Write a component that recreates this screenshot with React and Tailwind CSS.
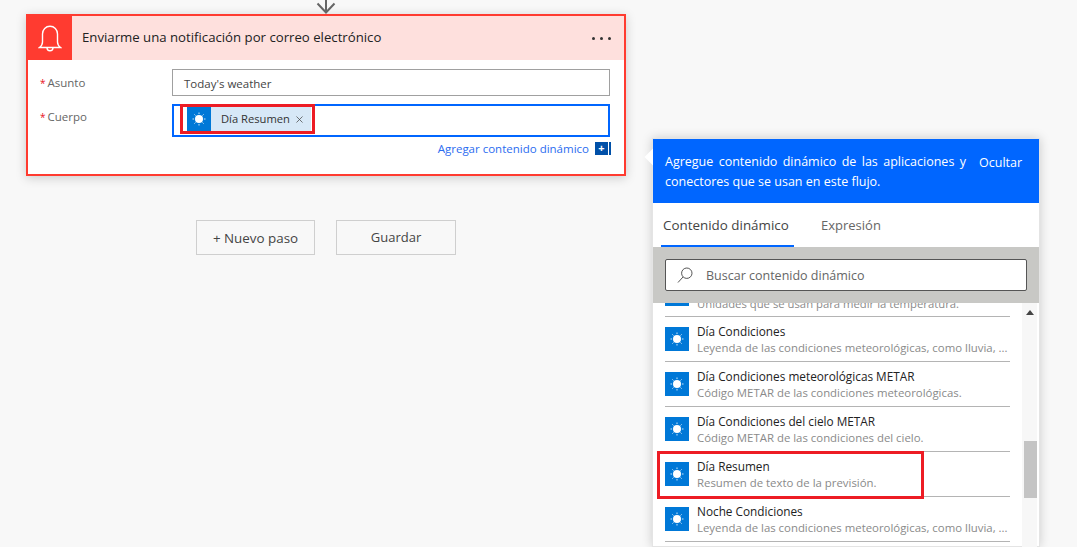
import React from 'react';
import { X } from 'lucide-react';

const items = [
  { title: 'Día Condiciones', desc: 'Leyenda de las condiciones meteorológicas, como lluvia, ...' },
  { title: 'Día Condiciones meteorológicas METAR', desc: 'Código METAR de las condiciones meteorológicas.' },
  { title: 'Día Condiciones del cielo METAR', desc: 'Código METAR de las condiciones del cielo.' },
  { title: 'Día Resumen', desc: 'Resumen de texto de la previsión.', marked: true },
  { title: 'Noche Condiciones', desc: 'Leyenda de las condiciones meteorológicas, como lluvia, ...' },
];

const SunIcon = () => (
  <div className="w-6 h-6 shrink-0 bg-[#0078d7] flex items-center justify-center">
    <svg width="16" height="16" viewBox="0 0 16 16" fill="none">
      <circle cx="8" cy="8" r="4" fill="#fff" />
      <g stroke="#cfe6f8" strokeWidth="1">
        <path d="M8 1.500v1.600M8 12.900v1.600M1.500 8h1.600M12.900 8h1.600M3.400 3.400l1.100 1.100M11.500 11.500l1.100 1.100M3.400 12.600l1.100-1.100M11.500 4.500l1.100-1.100" />
      </g>
    </svg>
  </div>
);

const BellIcon = () => (
  <svg width="24" height="27" viewBox="0 0 24 27" fill="none" stroke="#fff" strokeWidth="1.4">
    <path d="M1.500 22.500c2-1.500 3-3 3-5.500V9C4.500 4.500 7.800 1.200 12 1.200S19.500 4.500 19.500 9v8c0 2.500 1 4 3 5.500z" />
    <path d="M9 22.800a3 3 0 0 0 6 0" />
  </svg>
);

const SearchIcon = () => (
  <svg width="16" height="17" viewBox="0 0 16 17" fill="none" stroke="#555" strokeWidth="1">
    <circle cx="9.800" cy="6.200" r="5.200" />
    <path d="M6 10L1 15.500" />
  </svg>
);

const DynamicItem = ({ title, desc, marked }) => (
  <div className="relative h-[45px] pt-[10px] border-b border-[#b4b4b4] flex gap-2">
    <SunIcon />
    <div className="min-w-0 -mt-[4px]">
      <div className="text-[11.800px] leading-4 text-[#222] whitespace-nowrap">{title}</div>
      <div className="text-[11.400px] leading-4 mt-[1px] text-[#8a8a8a] whitespace-nowrap">{desc}</div>
    </div>
    {marked && (
      <div className="absolute -left-2 top-[-1px] w-[267px] h-[48px] border-[3px] border-[#ed1c24]" />
    )}
  </div>
);

export default function App() {
  return (
    <div className="h-[547px] w-[1077px] overflow-hidden bg-[#f8f8f8] flex font-['Open_Sans',sans-serif]">
      <div className="w-[652px] shrink-0 pl-[26px]">
        <div className="h-[14px] w-[600px] flex justify-center overflow-hidden">
          <svg width="20" height="14" viewBox="0 0 20 14" fill="none" stroke="#666" strokeWidth="2">
            <path d="M10 -2v14M1.500 3.500l8.500 9 8.500-9" />
          </svg>
        </div>

        <div className="w-[600px] h-[162px] border-2 border-[#ff3b30] bg-white shadow-[0_2px_10px_rgba(0,0,0,0.18)]">
          <div className="h-11 bg-[#fee0dd] flex items-center">
            <div className="w-11 h-11 bg-[#ff3b30] flex items-center justify-center">
              <BellIcon />
            </div>
            <div className="ml-[10px] flex-1 text-[13.200px] text-[#222]">
              Enviarme una notificación por correo electrónico
            </div>
            <div className="mr-[13px] flex gap-[5px]">
              <span className="w-[3px] h-[3px] rounded-full bg-[#333]" />
              <span className="w-[3px] h-[3px] rounded-full bg-[#333]" />
              <span className="w-[3px] h-[3px] rounded-full bg-[#333]" />
            </div>
          </div>

          <div className="pl-[12px] pr-[14px] pt-[9px]">
            <div className="flex items-start">
              <div className="w-[132px] text-[11.500px] leading-[26px] mt-[1px] text-[#666]">
                <span className="text-[#e81123] text-[10px] mr-[2px]">*</span>Asunto
              </div>
              <div className="flex-1 h-[27px] border border-[#a0a0a0] pl-[11px] text-[11.500px] leading-[27px] text-[#444]">
                Today's weather
              </div>
            </div>
            <div className="flex items-start mt-[8px]">
              <div className="w-[132px] text-[11.500px] leading-[26px] text-[#666]">
                <span className="text-[#e81123] text-[10px] mr-[2px]">*</span>Cuerpo
              </div>
              <div className="relative flex-1 h-[33px] border-2 border-[#0066ff] pl-[13px] pt-[1px]">
                <div className="inline-flex items-center h-6 bg-[#d7e8f7]">
                  <SunIcon />
                  <span className="ml-[10px] text-[11.200px] text-[#333]">Día Resumen</span>
                  <X size={11} strokeWidth={1.6} className="ml-[4px] mr-[6px] text-[#444]" />
                </div>
                <div className="absolute left-[6px] top-[-2px] w-[135px] h-[30px] border-[3px] border-[#ed1c24]" />
              </div>
            </div>
            <div className="flex justify-end items-center mt-[3px] -mr-[1px]">
              <span className="text-[11.500px] text-[#2b6cf0]">Agregar contenido dinámico</span>
              <div className="ml-[6px] w-[13px] h-[13px] bg-[#0050a8] text-white text-[11px] leading-[12px] text-center font-bold">+</div>
              <div className="ml-[1px] w-[2px] h-[13px] bg-[#0050a8]" />
            </div>
          </div>
        </div>

        <div className="w-[600px] mt-[44px] pl-[170px] flex gap-[21px]">
          <button className="w-[119px] h-[35px] pt-[1px] border border-[#cfcfcf] text-[13.400px] text-[#444]">+ Nuevo paso</button>
          <button className="w-[120px] h-[35px] pt-[1px] border border-[#cfcfcf] text-[13px] text-[#444]">Guardar</button>
        </div>
      </div>

      <div className="relative w-[388px] h-[409px] mt-[138px] shrink-0 border border-[#e4e4e4] bg-white shadow-[0_0_10px_rgba(0,0,0,0.18)]">
        <div className="absolute -left-[6px] top-[12px] w-3 h-3 rotate-45 bg-white" />

        <div className="relative h-[64px] bg-[#0066ff] flex text-white text-[12.500px] leading-[20px]">
          <div className="w-[301px] ml-3 mt-[13px] text-justify">
            Agregue contenido dinámico de las aplicaciones y conectores que se usan en este flujo.
          </div>
          <div className="ml-[13px] mt-[14px]">Ocultar</div>
        </div>

        <div className="h-[44px] flex pl-[8px] text-[13px]">
          <div className="w-[133px] pl-[2px] pt-[13px] font-medium text-[13.400px] leading-[18px] text-[#444] border-b-2 border-[#0066ff]">Contenido dinámico</div>
          <div className="ml-[27px] pt-[13px] leading-[18px] text-[#666]">Expresión</div>
        </div>

        <div className="h-[56px] bg-[#c8c8c5] px-3 pt-3">
          <div className="h-[32px] rounded-[2px] border border-[#555] bg-white flex items-center pl-[11px]">
            <SearchIcon />
            <span className="ml-[13px] pt-[2px] text-[12.500px] text-[#666]">Buscar contenido dinámico</span>
          </div>
        </div>

        <div className="h-[244px] overflow-hidden flex">
          <div className="w-[345px] ml-3 -mt-[31px] shrink-0">
            <div className="h-[45px] pt-[10px] border-b border-[#b4b4b4] flex gap-2">
              <SunIcon />
              <div className="mt-[14px] text-[11.300px] leading-4 text-[#8a8a8a] whitespace-nowrap">
                Unidades que se usan para medir la temperatura.
              </div>
            </div>
            {items.map((item) => (
              <DynamicItem key={item.title} {...item} />
            ))}
          </div>
          <div className="ml-[12px] w-[15px] bg-[#f7f7f7] flex flex-col items-center pl-[1px]">
            <div className="mt-[7px] w-0 h-0 border-x-[4px] border-x-transparent border-b-[5px] border-b-[#444]" />
            <div className="mt-[126px] w-[13px] h-[57px] bg-[#c4c4c4]" />
          </div>
        </div>
      </div>
    </div>
  );
}
